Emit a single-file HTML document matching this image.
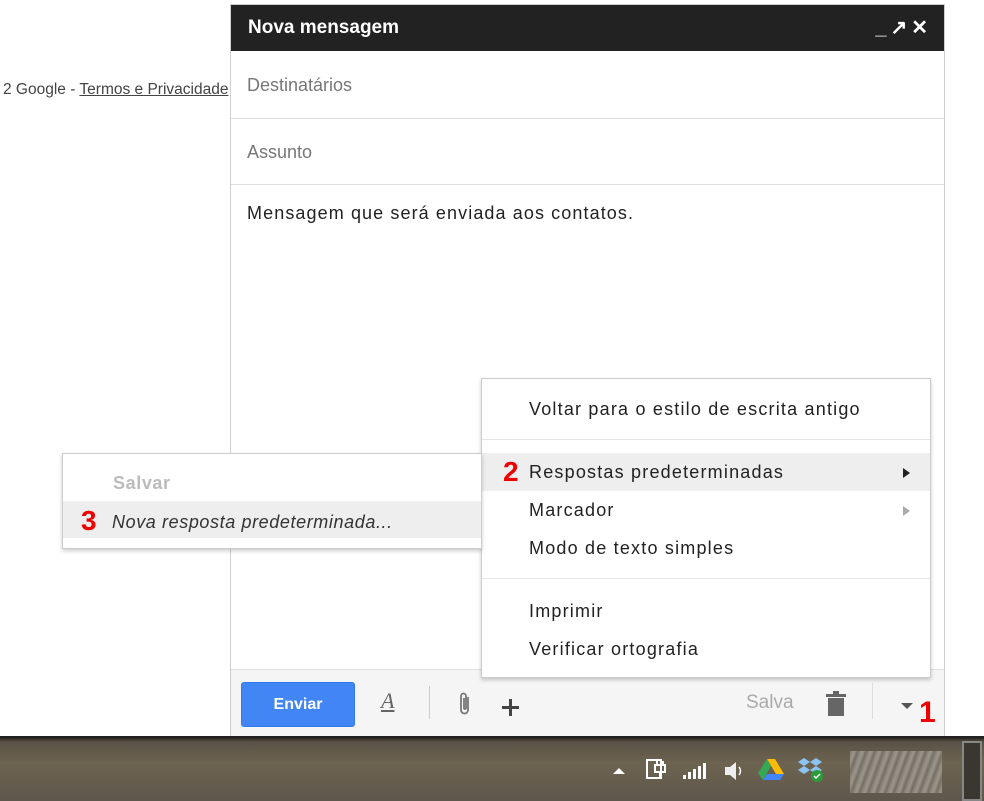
<!DOCTYPE html>
<html><head><meta charset="utf-8"><style>
*{margin:0;padding:0;box-sizing:border-box}
body{width:984px;height:801px;position:relative;overflow:hidden;background:#fff;font-family:"Liberation Sans",Arial,sans-serif;color:#222}
.abs{position:absolute}
.footer-l{left:3px;top:81px;font-size:15.5px;color:#444;white-space:nowrap}
.footer-l u{color:#444}
.win{left:230px;top:4px;width:715px;height:732px;border:1px solid #cfcfcf;background:#fff}
.hdr{left:0;top:0;width:713px;height:46px;background:#222;color:#fff;font-weight:bold;font-size:19px;line-height:46px;padding-left:17px}
.row{left:0;width:713px;border-bottom:1px solid #ddd;font-size:18px;color:#777;padding-left:16px}
.body{left:16px;top:198px;font-size:18px;color:#222;letter-spacing:1.1px;white-space:nowrap}
.bar{left:0;top:664px;width:713px;height:67px;background:#f5f5f5;border-top:1px solid #e0e0e0}
.btn{left:10px;top:12px;width:114px;height:45px;background:#4285f4;border:1px solid #3079ed;border-radius:3px;color:#fff;font-weight:bold;font-size:16px;text-align:center;line-height:43px}
.menu{left:481px;top:378px;width:450px;height:300px;background:#fff;border:1px solid #ccc;box-shadow:0 2px 4px rgba(0,0,0,.2);font-size:18px;letter-spacing:1.2px}
.mi{position:absolute;left:47px;white-space:nowrap}
.sub{left:62px;top:453px;width:420px;height:96px;background:#fff;border:1px solid #ccc;box-shadow:0 2px 4px rgba(0,0,0,.2);font-size:18px;letter-spacing:.6px}
.red{color:#e00;font-weight:bold;font-size:28px;letter-spacing:0}
.task{left:0;top:736px;width:984px;height:65px;background:linear-gradient(180deg,#2a2622 0,#5a5246 6%,#6d6350 40%,#5e574b 100%);border-top:2px solid #222}
</style></head><body>
<div class="abs footer-l">2 Google - <u>Termos e Privacidade</u></div>

<div class="abs win">
  <div class="abs hdr">Nova mensagem
    <span class="abs" style="right:12px;top:0;font-size:20px;letter-spacing:4px">_↗✕</span>
  </div>
  <div class="abs row" style="top:46px;height:68px;line-height:68px">Destinatários</div>
  <div class="abs row" style="top:114px;height:66px;line-height:66px">Assunto</div>
  <div class="abs body">Mensagem que será enviada aos contatos.</div>
  <div class="abs bar">
    <div class="abs btn">Enviar</div>
    <div class="abs" style="left:150px;top:18px;font-family:'Liberation Serif',serif;font-style:italic;font-size:22px;color:#666;text-decoration:underline">A</div>
    <div class="abs" style="left:198px;top:16px;width:1px;height:33px;background:#ccc"></div>
    <svg class="abs" style="left:226px;top:21px" width="16" height="26" viewBox="0 0 16 26"><path d="M11 6v13a3.5 3.5 0 0 1-7 0V5a2.5 2.5 0 0 1 5 0v12a1 1 0 0 1-2 0V7" fill="none" stroke="#777" stroke-width="1.8"/></svg>
    <div class="abs" style="left:271px;top:36px;width:17px;height:3px;background:#444"></div>
    <div class="abs" style="left:278px;top:29px;width:3px;height:17px;background:#444"></div>
    <div class="abs" style="left:515px;top:22px;font-size:19px;color:#aaa">Salva</div>
    <svg class="abs" style="left:594px;top:21px" width="22" height="26" viewBox="0 0 22 26"><rect x="1" y="3" width="20" height="3" fill="#666"/><rect x="8" y="0" width="6" height="3" fill="#666"/><rect x="3" y="7" width="16" height="18" fill="#666"/></svg>
    <div class="abs" style="left:641px;top:13px;width:1px;height:36px;background:#ddd"></div>
    <div class="abs" style="left:670px;top:33px;width:0;height:0;border-left:6px solid transparent;border-right:6px solid transparent;border-top:6px solid #555"></div>
    <div class="abs red" style="left:688px;top:26px;font-size:30px">1</div>
  </div>
</div>

<div class="abs menu">
  <div class="mi" style="top:20px">Voltar para o estilo de escrita antigo</div>
  <div class="abs" style="left:0;top:60px;width:448px;height:1px;background:#e5e5e5"></div>
  <div class="abs" style="left:0;top:74px;width:448px;height:38px;background:#eee"></div>
  <div class="mi red" style="left:21px;top:77px">2</div>
  <div class="mi" style="top:83px">Respostas predeterminadas</div>
  <div class="abs" style="left:421px;top:89px;border-top:5px solid transparent;border-bottom:5px solid transparent;border-left:7px solid #222"></div>
  <div class="mi" style="top:121px">Marcador</div>
  <div class="abs" style="left:421px;top:127px;border-top:5px solid transparent;border-bottom:5px solid transparent;border-left:7px solid #aaa"></div>
  <div class="mi" style="top:159px">Modo de texto simples</div>
  <div class="abs" style="left:0;top:199px;width:448px;height:1px;background:#e5e5e5"></div>
  <div class="mi" style="top:222px">Imprimir</div>
  <div class="mi" style="top:260px">Verificar ortografia</div>
</div>

<div class="abs sub">
  <div class="abs" style="left:50px;top:19px;color:#bbb;font-weight:bold;font-size:18px">Salvar</div>
  <div class="abs" style="left:0;top:47px;width:418px;height:37px;background:#eee"></div>
  <div class="abs red" style="left:18px;top:51px">3</div>
  <div class="abs" style="left:49px;top:58px;font-style:italic;color:#333;white-space:nowrap">Nova resposta predeterminada...</div>
</div>

<div class="abs task">
  <div class="abs" style="left:613px;top:30px;border-left:6px solid transparent;border-right:6px solid transparent;border-bottom:6px solid #fff"></div>
  <svg class="abs" style="left:645px;top:18px" width="24" height="26"><rect x="2" y="4" width="14" height="18" fill="none" stroke="#fff" stroke-width="2"/><path d="M10 9h10v7h-10zM12 5v4M18 5v4M15 16v6" stroke="#fff" stroke-width="2" fill="none"/></svg>
  <svg class="abs" style="left:682px;top:24px" width="26" height="18"><rect x="1" y="13" width="3" height="4" fill="#fff"/><rect x="6" y="10" width="3" height="7" fill="#fff"/><rect x="11" y="7" width="3" height="10" fill="#fff"/><rect x="16" y="4" width="3" height="13" fill="#fff"/><rect x="21" y="1" width="3" height="16" fill="#fff"/></svg>
  <svg class="abs" style="left:723px;top:22px" width="22" height="22"><path d="M2 7h5l6-5v18l-6-5H2z" fill="#eee"/><path d="M16 7q3 4 0 8" stroke="#fff" fill="none" stroke-width="1.5"/></svg>
  <svg class="abs" style="left:758px;top:20px" width="26" height="24"><path d="M9 1h8l9 15h-8z" fill="#fbbc05"/><path d="M9 1l4 7-8 14-5-7z" fill="#34a853"/><path d="M5 22h17l4-6H9z" fill="#4285f4"/></svg>
  <svg class="abs" style="left:797px;top:18px" width="28" height="28"><path d="M7 2l6 4-6 4-6-4zM19 2l6 4-6 4-6-4zM7 10l6 4-6 4-6-4zM19 10l6 4-6 4-6-4z" fill="#8bc4f0"/><circle cx="20" cy="20" r="6" fill="#2a9d3a"/><path d="M17 20l2 2 4-4" stroke="#fff" fill="none" stroke-width="1.5"/></svg>
  <div class="abs" style="left:850px;top:13px;width:92px;height:42px;background:repeating-linear-gradient(110deg,#7d776c 0,#9c978d 4px,#6f695f 8px)"></div>
  <div class="abs" style="left:962px;top:3px;width:20px;height:60px;border:2px solid #888;background:#3a3630"></div>
</div>
</body></html>
